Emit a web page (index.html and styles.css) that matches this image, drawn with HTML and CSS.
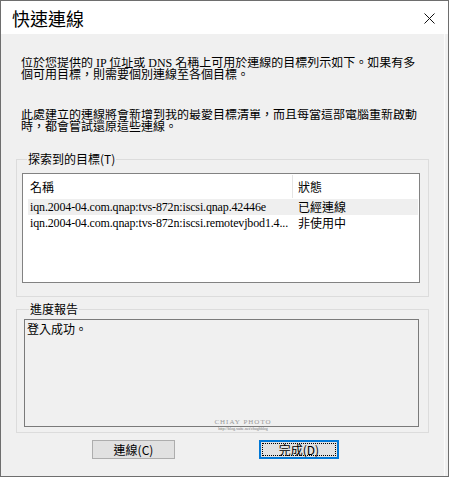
FILE: index.html
```html
<!DOCTYPE html>
<html lang="zh-Hant">
<head>
<meta charset="utf-8">
<title>快速連線</title>
<link rel="stylesheet" href="styles.css">
</head>
<body>
<div class="window">
  <div class="titlebar">
    <span class="title">快速連線</span>
    <svg class="close" width="11" height="11" viewBox="0 0 11 11"><path d="M0.5 0.5 L10.5 10.5 M10.5 0.5 L0.5 10.5" stroke="#111" stroke-width="1" fill="none"/></svg>
  </div>
  <div class="content">
    <p class="text p1">位於您提供的 IP 位址或 DNS 名稱上可用於連線的目標列示如下。如果有多個可用目標，則需要個別連線至各個目標。</p>
    <p class="text p2">此處建立的連線將會新增到我的最愛目標清單，而且每當這部電腦重新啟動時，都會嘗試還原這些連線。</p>
    <fieldset class="group g1">
      <legend>探索到的目標(T)</legend>
      <div class="list">
        <div class="row head">
          <span class="c-name">名稱</span>
          <span class="c-status">狀態</span>
        </div>
        <div class="row item sel">
          <span class="c-name latin">iqn.2004-04.com.qnap:tvs-872n:iscsi.qnap.42446e</span>
          <span class="c-status">已經連線</span>
        </div>
        <div class="row item">
          <span class="c-name latin">iqn.2004-04.com.qnap:tvs-872n:iscsi.remotevjbod1.4...</span>
          <span class="c-status">非使用中</span>
        </div>
      </div>
    </fieldset>
    <fieldset class="group g2">
      <legend>進度報告</legend>
      <div class="report">登入成功。</div>
    </fieldset>
    <div class="buttons">
      <button class="btn">連線(C)</button>
      <button class="btn default"><span class="focus">完成(D)</span></button>
    </div>
  </div>
  <div class="watermark">
    <div class="wm1">CHIAY PHOTO</div>
    <div class="wm2">http://blog.xuite.net/chughblog</div>
  </div>
</div>
</body>
</html>
```
FILE: styles.css
```css
html, body {
  margin: 0;
  padding: 0;
  background: #f0f0f0;
}
.window {
  position: relative;
  width: 449px;
  height: 477px;
  box-sizing: border-box;
  border: 1px solid #6e6e6e;
  background: #f0f0f0;
  display: flex;
  flex-direction: column;
  font-family: "Liberation Serif", "Noto Sans CJK TC", serif;
  font-size: 12px;
  color: #000;
  overflow: hidden;
}
.titlebar {
  height: 33px;
  flex: none;
  background: #fff;
  display: flex;
  align-items: center;
  justify-content: space-between;
  padding: 0 13px 0 11px;
}
.title {
  font-family: "Noto Sans CJK TC", sans-serif;
  font-size: 18px;
  line-height: 20px;
  margin-top: 1px;
}
.close {
  display: block;
  margin-top: 1px;
}
.content {
  flex: 1;
  display: flex;
  flex-direction: column;
  padding: 0 20px 0 15px;
  border-right: 1px solid #fbfbfb;
  margin-right: 3px;
}
.content > * {
  flex: none;
}
.text {
  margin: 0;
  padding-left: 5px;
  line-height: 12px;
  height: 24px;
  overflow: hidden;
}
.p1 {
  margin-top: 23px;
}
.p2 {
  margin-top: 28px;
}
.group {
  margin: 0;
  padding: 0 8px 0 5px;
  border: 1px solid #dcdcdc;
  width: 413px;
  box-sizing: border-box;
  min-width: 0;
}
.group legend {
  padding: 0 1px;
  margin-left: 5px;
  line-height: 12px;
  height: 12px;
  font-family: "Noto Sans CJK TC", sans-serif;
}
.g1 {
  margin-top: 20px;
  padding-top: 8px;
  padding-bottom: 13px;
}
.list {
  height: 110px;
  box-sizing: border-box;
  border: 1px solid #828282;
  background: #fff;
  padding: 0 1px 0 5px;
}
.row {
  display: flex;
  align-items: center;
}
.head {
  height: 25px;
}
.head .c-name {
  border-right: 1px solid #e5e5e5;
  height: 23px;
  line-height: 23px;
}
.head .c-status {
  line-height: 23px;
}
.item {
  height: 16px;
  line-height: 16px;
}
.sel {
  background: #efefef;
}
.c-name {
  width: 265px;
  box-sizing: border-box;
  padding-left: 2px;
  white-space: nowrap;
  overflow: hidden;
  flex: none;
}
.c-status {
  padding-left: 5px;
  font-family: "Noto Sans CJK TC", sans-serif;
}
.latin {
  font-family: "Liberation Serif", serif;
  letter-spacing: -0.15px;
}
.head .c-name, .head .c-status {
  font-family: "Noto Sans CJK TC", sans-serif;
}
.g2 {
  margin-top: 6px;
  padding: 4px 9px 5px 7px;
}
.report {
  height: 108px;
  box-sizing: border-box;
  border: 1px solid #7a7a7a;
  background: #f0f0f0;
  padding: 2px 2px;
  line-height: 14px;
  font-family: "Noto Sans CJK TC", sans-serif;
}
.buttons {
  display: flex;
  margin-top: 7px;
  padding-left: 76px;
  gap: 84px;
}
.btn {
  width: 83px;
  height: 19px;
  box-sizing: border-box;
  margin: 0;
  padding: 0;
  background: #e1e1e1;
  border: 1px solid #adadad;
  font-family: "Noto Sans CJK TC", sans-serif;
  font-size: 12px;
  line-height: 15px;
  color: #000;
  display: flex;
  align-items: center;
  justify-content: center;
}
.btn.default {
  width: 80px;
  border: 2px solid #0078d7;
  padding: 1px;
}
.focus {
  display: flex;
  align-items: center;
  justify-content: center;
  width: 100%;
  height: 100%;
  box-sizing: border-box;
  border: 1px dotted #000;
}
.watermark {
  position: absolute;
  left: 206px;
  top: 417px;
  width: 72px;
  text-align: center;
  color: #9a9a9a;
  font-family: "Liberation Serif", serif;
}
.wm1 {
  font-size: 7px;
  line-height: 8px;
  letter-spacing: 1px;
}
.wm2 {
  font-size: 4px;
  line-height: 6px;
  color: #777;
}
```
